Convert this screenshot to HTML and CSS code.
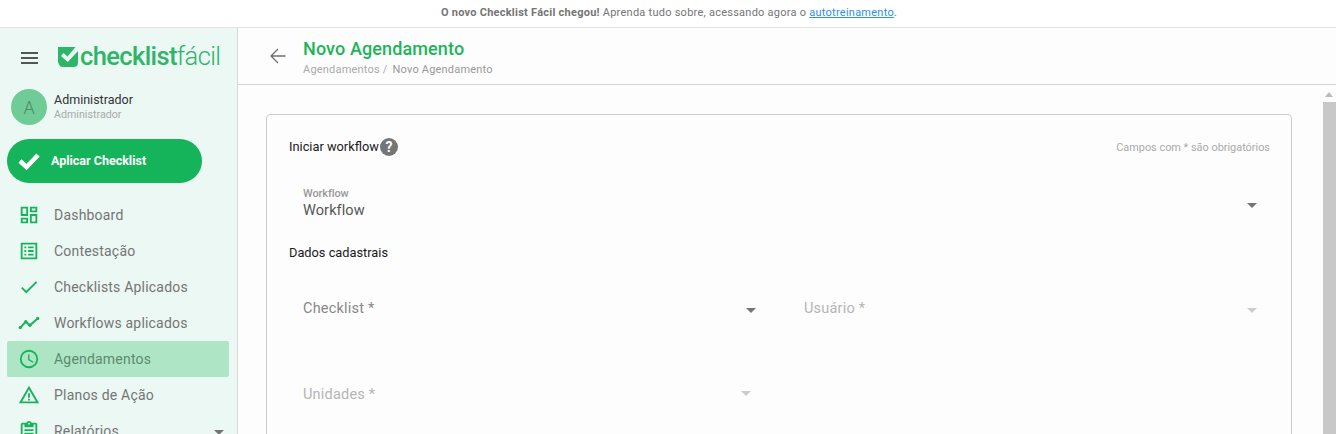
FILE: index.html
```html
<!DOCTYPE html>
<html lang="pt-BR">
<head>
<meta charset="utf-8">
<title>Novo Agendamento</title>
<link rel="stylesheet" href="styles.css">
</head>
<body>
<div class="banner"><b>O novo Checklist Fácil chegou!</b> Aprenda tudo sobre, acessando agora o <a href="#">autotreinamento</a>.</div>
<div class="app">
  <aside class="sidebar">
    <div class="brand">
      <svg class="burger" viewBox="0 0 17 12" width="17" height="12"><path d="M0 1h17M0 6h17M0 11h17" stroke="#212121" stroke-width="1.6" fill="none"/></svg>
      <svg class="logo-mark" viewBox="0 0 20 20" width="20" height="20"><path d="M0 0H17.500L9.500 9.500 5.500 6 3 9 9.800 15 20 4V15.500Q20 20 15.500 20H5Q2 20 1 17.500L0 15Z" fill="#2fb46a"/></svg>
      <span class="logo-text"><b>checklist</b>fácil</span>
    </div>
    <div class="user">
      <div class="avatar">A</div>
      <div>
        <div class="user-name">Administrador</div>
        <div class="user-role">Administrador</div>
      </div>
    </div>
    <button class="apply">
      <svg viewBox="0 0 24 20" width="24" height="20"><path d="M3 10 9.500 16 21 4" stroke="#fff" stroke-width="4.500" fill="none"/></svg>
      Aplicar Checklist
    </button>
    <nav class="menu">
      <a class="item"><svg viewBox="0 0 24 24"><path d="M19 5v2h-4V5h4M9 5v6H5V5h4m10 8v6h-4v-6h4M9 17v2H5v-2h4M21 3h-8v6h8V3zM11 3H3v10h8V3zm10 8h-8v10h8V11zm-10 4H3v6h8v-6z"/></svg>Dashboard</a>
      <a class="item"><svg viewBox="0 0 24 24"><path d="M3 3h18v18H3zm2 2v14h14V5zm2 2h2v2H7zm4 0h6v2h-6zm-4 4h2v2H7zm4 0h6v2h-6zm-4 4h2v2H7zm4 0h6v2h-6z"/></svg>Contestação</a>
      <a class="item"><svg viewBox="0 0 24 24"><path d="M9 16.200 4.800 12l-1.400 1.400L9 19 21 7l-1.400-1.400z"/></svg>Checklists Aplicados</a>
      <a class="item"><svg viewBox="0 0 24 24"><path d="M2.500 17 8.500 10.500l4.500 4L21.500 7" stroke="#1db45a" stroke-width="2.200" fill="none"/><circle cx="2.500" cy="17" r="1.800"/><circle cx="8.500" cy="10.500" r="1.800"/><circle cx="13" cy="14.500" r="1.800"/><circle cx="21.500" cy="7" r="1.800"/></svg>Workflows aplicados</a>
      <a class="item active"><svg viewBox="0 0 24 24"><path d="M12 2a10 10 0 1 0 0 20 10 10 0 0 0 0-20zm0 18a8 8 0 1 1 0-16 8 8 0 0 1 0 16zm.5-13H11v6l5.200 3.200.8-1.300-4.500-2.700z"/></svg>Agendamentos</a>
      <a class="item"><svg viewBox="0 0 24 24"><path d="M1 21h22L12 2zm3.500-2L12 6l7.500 13zM11 16h2v2h-2zm0-6h2v5h-2z"/></svg>Planos de Ação</a>
      <a class="item"><svg viewBox="0 0 24 24"><path d="M19 3h-4.200C14.400 1.800 13.300 1 12 1s-2.400.8-2.800 2H5a2 2 0 0 0-2 2v14c0 1.100.9 2 2 2h14a2 2 0 0 0 2-2V5a2 2 0 0 0-2-2zm-7 0a1 1 0 1 1 0 2 1 1 0 0 1 0-2zm7 16H5V5h2v3h10V5h2zM7 10h10v2H7zm0 4h10v2H7z"/></svg>Relatórios<i class="caret caret-menu"></i></a>
    </nav>
  </aside>
  <main class="main">
    <header class="head">
      <svg class="back" viewBox="0 0 24 24" width="24" height="24"><path d="M19.500 12H5.500M12 5 5 12l7 7" stroke="#6f6f6f" stroke-width="1.300" fill="none"/></svg>
      <div>
        <h1>Novo Agendamento</h1>
        <div class="crumbs"><span>Agendamentos /</span><span class="crumb-current">Novo Agendamento</span></div>
      </div>
    </header>
    <div class="body">
      <div class="content">
        <section class="card">
          <div class="card-top">
            <div class="section-title">Iniciar workflow<span class="help">?</span></div>
            <div class="required">Campos com * são obrigatórios</div>
          </div>
          <div class="field field-filled">
            <div>
              <div class="mini-label">Workflow</div>
              <div class="value">Workflow</div>
            </div>
            <i class="caret"></i>
          </div>
          <div class="section-title sub">Dados cadastrais</div>
          <div class="grid">
            <div class="field"><span class="label">Checklist *</span><i class="caret caret-low"></i></div>
            <div class="field off"><span class="label">Usuário *</span><i class="caret caret-low"></i></div>
            <div class="field off narrow"><span class="label">Unidades *</span><i class="caret caret-high"></i></div>
          </div>
        </section>
      </div>
      <div class="scrollbar"><i class="scroll-up"></i><div class="thumb"></div></div>
    </div>
  </main>
</div>
</body>
</html>
```
FILE: styles.css
```css
* { box-sizing: border-box; }
html, body { margin: 0; height: 100%; overflow: hidden; }
body { font-family: Roboto, "Liberation Sans", sans-serif; background: #fdfdfd; color: #333; display: flex; flex-direction: column; height: 434px; }

.banner { height: 28px; flex: none; border-bottom: 1px solid #e2e2e2; padding-left: 2px; text-align: center; font-size: 11px; line-height: 25px; color: #757575; background: #fff; letter-spacing: .25px; }
.banner a { color: #2d8fe6; text-decoration: underline; }

.app { flex: 1; display: flex; min-height: 0; }

.sidebar { width: 238px; flex: none; background: #ebf8f3; border-right: 1px solid #d8d8d8; overflow: hidden; }
.brand { display: flex; align-items: center; height: 56px; padding: 1px 0 0 21px; }
.burger { margin-right: 20px; margin-top: 2px; }
.logo-mark { flex: none; margin-right: 2px; }
.logo-text { font-size: 25.500px; color: #2fb46a; font-weight: 300; line-height: 26px; margin-top: -1px; letter-spacing: -.62px; }
.logo-text b { font-weight: 500; }

.user { display: flex; align-items: center; gap: 7px; margin: 5px 0 0 11px; height: 36px; }
.avatar { width: 36px; height: 36px; border-radius: 50%; background: #70cc97; color: #4f8a69; font-size: 18px; font-weight: 300; display: flex; align-items: center; justify-content: center; }
.user-name { font-size: 12.500px; line-height: 15px; margin-top: -2px; color: #333; }
.user-role { font-size: 10.700px; line-height: 13px; margin-top: 1px; color: #aaa; }

.apply { display: flex; align-items: center; width: 195px; height: 44px; margin: 14px 0 0 7px; padding: 0 0 2px 10px; gap: 10px; border: 0; border-radius: 22px; background: #16b45a; color: #fff; font: 700 12.500px Roboto, sans-serif; }
.apply svg { margin-top: 2px; }

.menu { display: flex; flex-direction: column; margin-top: 14px; }
.item { display: flex; align-items: center; height: 36px; margin: 0 8px 0 7px; padding-left: 11px; border-radius: 2px; font-size: 14px; color: #757575; letter-spacing: .2px; }
.item svg { width: 22px; height: 22px; fill: #16b45a; margin-right: 14px; flex: none; }
.item.active { background: #aee5c4; color: #5d8a70; }
.caret { width: 0; height: 0; border-left: 5px solid transparent; border-right: 5px solid transparent; border-top: 5px solid #757575; display: block; }
.caret-menu { margin-left: auto; margin-right: 5px; margin-top: 2px; }
.caret-low { margin-top: 4px; }
.caret-high { margin-top: -2px; }

.main { flex: 1; min-width: 0; display: flex; flex-direction: column; }
.head { height: 57px; flex: none; border-bottom: 1px solid #d4d4d4; display: flex; align-items: center; padding: 2px 0 0 28px; gap: 13px; }
.back { flex: none; margin-top: -2px; }
h1 { margin: 0; font-size: 18px; line-height: 22px; font-weight: 500; color: #1db45a; letter-spacing: .12px; }
.crumbs { display: flex; gap: 5px; font-size: 11px; line-height: 13px; margin-top: 3px; color: #aaa; letter-spacing: .2px; }
.crumb-current { color: #999; }

.body { flex: 1; display: flex; min-height: 0; }
.content { flex: 1; min-width: 0; padding: 29px 31px 0 28px; overflow: hidden; }
.card { border: 1px solid #ccc; border-radius: 4px; height: 500px; padding: 20px 21px 0 22px; }
.card-top { display: flex; justify-content: space-between; align-items: center; height: 24px; }
.section-title { font-size: 12.800px; line-height: 24px; color: #1a1a1a; display: flex; align-items: center; }
.help { width: 18px; height: 18px; border-radius: 50%; background: #757575; color: #fff; font-size: 14px; font-weight: 700; display: flex; align-items: center; justify-content: center; margin-left: 1px; }
.required { font-size: 10.900px; color: #aaa; }

.field { display: flex; align-items: center; justify-content: space-between; padding: 0 13px 0 14px; height: 46px; }
.field-filled { margin-top: 25px; height: 42px; padding-bottom: 2px; }
.mini-label { font-size: 11px; line-height: 13px; color: #999; font-weight: 500; letter-spacing: -.1px; }
.value { font-size: 14.500px; line-height: 20px; margin-top: 1px; color: #555; letter-spacing: .1px; }
.field-filled .caret { margin-top: 2px; }
.sub { margin-top: 17px; line-height: 20px; }

.grid { display: grid; grid-template-columns: 480px 1fr; column-gap: 21px; row-gap: 40px; margin-top: 22px; }
.label { font-size: 14.500px; color: #888; letter-spacing: .2px; }
.off .label { color: #b5b5b5; }
.off .caret { border-top-color: #ccc; }
.narrow { margin-right: 5px; }

.scrollbar { width: 13px; flex: none; position: relative; padding-top: 17px; }
.scroll-up { position: absolute; top: 7px; left: 2px; width: 0; height: 0; border-left: 4px solid transparent; border-right: 4px solid transparent; border-bottom: 5px solid #bbb; }
.thumb { height: 100%; background: #c8c8c8; }
```
